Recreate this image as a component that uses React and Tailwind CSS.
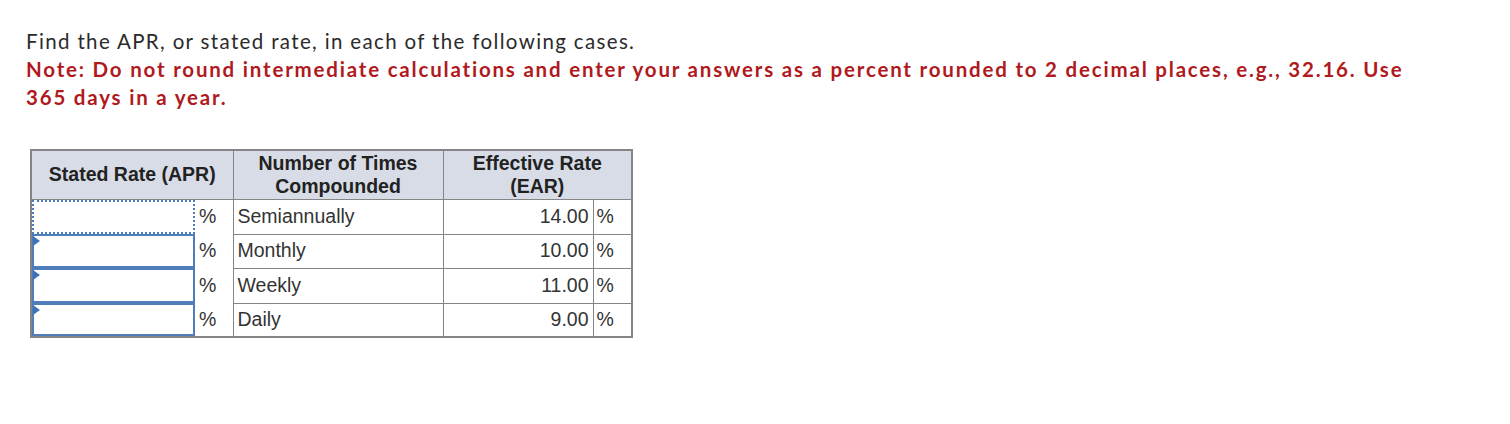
import React from 'react';

const rows = [
    { label: 'Semiannually', ear: '14.00', focused: true, h: 'h-[35px]' },
    { label: 'Monthly', ear: '10.00', h: 'h-[34px]' },
    { label: 'Weekly', ear: '11.00', h: 'h-[35px]' },
    { label: 'Daily', ear: '9.00', h: 'h-[34px]' },
];

function RateInput({ focused }) {
    if (focused) {
        return (
            <div className="h-full min-h-[33px] w-[163px] border-2 border-dotted border-[#4a7bbd] bg-white"></div>
        );
    }
    return (
        <div className="relative h-full min-h-[33px] w-[163px] border-2 border-[#4f7db9] bg-white">
            {/* little marker in the corner */}
            <span className="absolute -left-[1px] top-0 h-0 w-0 border-y-[5px] border-l-[7px] border-y-transparent border-l-[#3f72b5]"></span>
        </div>
    );
}

export default function App() {
    return (
        <div className="min-h-[424px] w-[1510px] bg-white px-[26px] pt-[28px] text-[#333]">
            <div className="w-[1400px] font-['Lato',sans-serif] text-[20.5px]">
                <p className="leading-[27px] tracking-[1.35px] text-[#2b2b2b]">
                    Find the APR, or stated rate, in each of the following cases.
                </p>
                <p className="font-bold leading-[28px] tracking-[1.8px] text-[#b0191d]">
                    Note: Do not round intermediate calculations and enter your answers as a percent rounded to 2 decimal places, e.g., 32.16. Use 365 days in a year.
                </p>
            </div>

            <table className="ml-[4px] mt-[38px] border-collapse border-2 border-[#858585] font-['Liberation_Sans',Arial,sans-serif] text-[19.5px] text-[#333]">
                <thead>
                    <tr className="h-[49px] bg-[#d7dce6]">
                        <th colSpan={2} className="w-[201px] border border-[#858585] px-2 text-center font-bold leading-[23px] text-[#222]">
                            Stated Rate (APR)
                        </th>
                        <th className="w-[210px] border border-[#858585] px-2 text-center font-bold leading-[23px] text-[#222]">
                            Number of Times<br />Compounded
                        </th>
                        <th colSpan={2} className="w-[189px] border border-[#858585] px-2 text-center font-bold leading-[23px] text-[#222]">
                            Effective Rate<br />(EAR)
                        </th>
                    </tr>
                </thead>
                <tbody>
                    {rows.map((r) => (
                        <tr key={r.label} className={r.h}>
                            <td className="h-[inherit] w-[163px] p-0 align-middle">
                                <RateInput focused={r.focused} />
                            </td>
                            <td className="w-[38px] pl-[4px] leading-none">%</td>
                            <td className="border border-[#858585] pl-[4px]">{r.label}</td>
                            <td className="w-[150px] border border-[#858585] pr-[4px] text-right">{r.ear}</td>
                            <td className="w-[39px] border border-[#858585] pl-[3px]">%</td>
                        </tr>
                    ))}
                </tbody>
            </table>
        </div>
    );
}
